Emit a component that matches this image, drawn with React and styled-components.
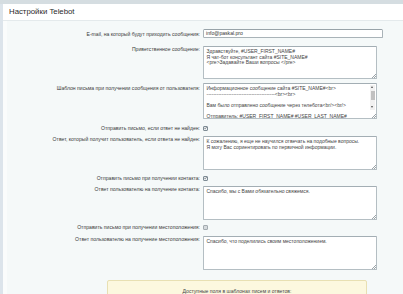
import React from "react";
import styled, { createGlobalStyle } from "styled-components";

const GlobalStyle = createGlobalStyle`
	html, body {
		margin: 0;
		padding: 0;
		background: #dbe3e8;
	}
	body {
		width: 403px;
		height: 294px;
		overflow: hidden;
		font-family: "Liberation Sans", Arial, sans-serif;
	}
`;

// layout
const Page = styled.div`
	display: flex;
	box-sizing: border-box;
	height: 294px;
	padding: 4px 0 0 3px;
	background: linear-gradient(#d5dde1, #d5dde1) top / 100% 4px no-repeat, #dce4eb;
`;

const Panel = styled.div`
	flex: 1;
	display: flex;
	flex-direction: column;
	background: #fafcfc;
`;

const Header = styled.div`
	height: 16px;
	padding-left: 6px;
	background: #fff;
	border-bottom: 1px solid #e4eaec;
	font-size: 7.8px;
	line-height: 16px;
	color: #2a2a2a;
`;

const Body = styled.div`
	flex: 1;
	margin-left: 4px;
	padding-top: 8px;
	background: #f5f9f9;
	overflow: hidden;
`;

const Row = styled.div`
	display: flex;
	align-items: ${(p) => (p.$center ? "center" : "flex-start")};
	margin-top: ${(p) => p.$gap || 0}px;
	min-height: ${(p) => (p.$center ? "6px" : "auto")};
`;

const Label = styled.div`
	width: 193px;
	flex-shrink: 0;
	padding-top: ${(p) => p.$pad || 0}px;
	text-align: right;
	font-size: 5.1px;
	line-height: 6px;
	color: #3a3a3a;
	white-space: nowrap;
`;

const Field = styled.div`
	margin-left: 3px;
`;

// controls
const Input = styled.div`
	box-sizing: border-box;
	width: 180px;
	height: 9px;
	padding: 0 2px;
	background: #fff;
	border: 1px solid #a9b3b8;
	border-top-color: #98a3a9;
	border-radius: 1.5px;
	font-size: 5.1px;
	line-height: 7px;
	color: #333;
`;

const TextBox = styled.div`
	position: relative;
	box-sizing: border-box;
	width: 174px;
	height: ${(p) => p.$h || 34}px;
	padding: 2px 2.5px;
	background: #fff;
	border: 1px solid #b4bec3;
	border-top-color: #a3aeb4;
	border-radius: 1px;
	font-size: 5px;
	line-height: 5.65px;
	color: #444;
	white-space: pre;
	overflow: hidden;

	&::after {
		content: "";
		position: absolute;
		right: 0;
		bottom: 0;
		width: 4px;
		height: 4px;
		background: linear-gradient(
			135deg,
			transparent 45%,
			#9aa3a8 45%,
			#9aa3a8 55%,
			transparent 55%,
			transparent 70%,
			#9aa3a8 70%,
			#9aa3a8 80%,
			transparent 80%
		);
	}
`;

const Scrollbar = styled.div`
	position: absolute;
	top: 1px;
	right: 1px;
	bottom: 8px;
	width: 5px;
	background: #f1f1f1;
`;

const Arrow = styled.div`
	position: absolute;
	left: 1px;
	${(p) => (p.$down ? "bottom: 2px;" : "top: 1px;")}
	width: 0;
	height: 0;
	border-left: 1.5px solid transparent;
	border-right: 1.5px solid transparent;
	${(p) => (p.$down ? "border-top: 2px solid #505050;" : "border-bottom: 2px solid #505050;")}
`;

const Thumb = styled.div`
	position: absolute;
	top: 6px;
	left: 0.5px;
	width: 4px;
	height: 9px;
	background: #c1c1c1;
`;

const Check = styled.div`
	box-sizing: border-box;
	width: 5px;
	height: 5px;
	border: 1px solid ${(p) => (p.$checked ? "#7e8c95" : "#a3abb0")};
	border-radius: 1px;
	background: ${(p) => (p.$checked ? "linear-gradient(#fff, #e4eaed)" : "#d5dadd")};
	display: flex;
	align-items: center;
	justify-content: center;

	svg {
		display: block;
	}
`;

const InfoBox = styled.div`
	box-sizing: border-box;
	width: 260px;
	height: 40px;
	margin: 10px 0 0 100px;
	padding-top: 7px;
	background: #fcf8df;
	border: 1px solid #e8e0b3;
	border-radius: 2px;
	text-align: center;
	font-size: 5.1px;
	line-height: 6px;
	color: #444;
`;

function CheckBox({ checked }) {
	return (
		<Check $checked={checked}>
			{checked && (
				<svg width="4" height="4" viewBox="0 0 4 4">
					<path d="M0.4 2 L1.5 3.1 L3.6 0.7" fill="none" stroke="#2f3b44" strokeWidth="0.8" />
				</svg>
			)}
		</Check>
	);
}

const greeting = `Здравствуйте, #USER_FIRST_NAME#
Я чат-бот консультант сайта #SITE_NAME#
<pre>Задавайте Ваши вопросы </pre>`;

const template = `Информационное сообщение сайта #SITE_NAME#<br>
-----------------------------------------<br><br>

Вам было отправлено сообщение через телебота<br/><br/>

Отправитель: #USER_FIRST_NAME# #USER_LAST_NAME#`;

const notFound = `К сожалению, я еще не научился отвечать на подобные вопросы.
Я могу Вас сориентировать по первичной информации.`;

export default function App() {
	return (
		<>
			<GlobalStyle />
			<Page>
				<Panel>
					<Header>Настройки Telebot</Header>
					<Body>
						<Row>
							<Label $pad={2}>E-mail, на который будут приходить сообщения:</Label>
							<Field>
								<Input>info@paskal.pro</Input>
							</Field>
						</Row>
						<Row $gap={8}>
							<Label>Приветственное сообщение:</Label>
							<Field>
								<TextBox $h={33}>{greeting}</TextBox>
							</Field>
						</Row>
						<Row $gap={4}>
							<Label $pad={2}>Шаблон письма при получении сообщения от пользователя:</Label>
							<Field>
								<TextBox $h={36}>
									{template}
									<Scrollbar>
										<Arrow />
										<Thumb />
										<Arrow $down />
									</Scrollbar>
								</TextBox>
							</Field>
						</Row>
						<Row $gap={6} $center>
							<Label>Отправить письмо, если ответ не найден:</Label>
							<Field>
								<CheckBox checked />
							</Field>
						</Row>
						<Row $gap={5}>
							<Label>Ответ, который получит пользователь, если ответа не найден:</Label>
							<Field>
								<TextBox>{notFound}</TextBox>
							</Field>
						</Row>
						<Row $gap={5} $center>
							<Label>Отправить письмо при получении контакта:</Label>
							<Field>
								<CheckBox checked />
							</Field>
						</Row>
						<Row $gap={5}>
							<Label>Ответ пользователю на получение контакта:</Label>
							<Field>
								<TextBox>Спасибо, мы с Вами обязательно свяжемся.</TextBox>
							</Field>
						</Row>
						<Row $gap={4} $center>
							<Label>Отправить письмо при получении местоположения:</Label>
							<Field>
								<CheckBox />
							</Field>
						</Row>
						<Row $gap={6}>
							<Label>Ответ пользователю на получение местоположения:</Label>
							<Field>
								<TextBox>Спасибо, что поделились своим местоположением.</TextBox>
							</Field>
						</Row>
						<InfoBox>Доступные поля в шаблонах писем и ответов:</InfoBox>
					</Body>
				</Panel>
			</Page>
		</>
	);
}
